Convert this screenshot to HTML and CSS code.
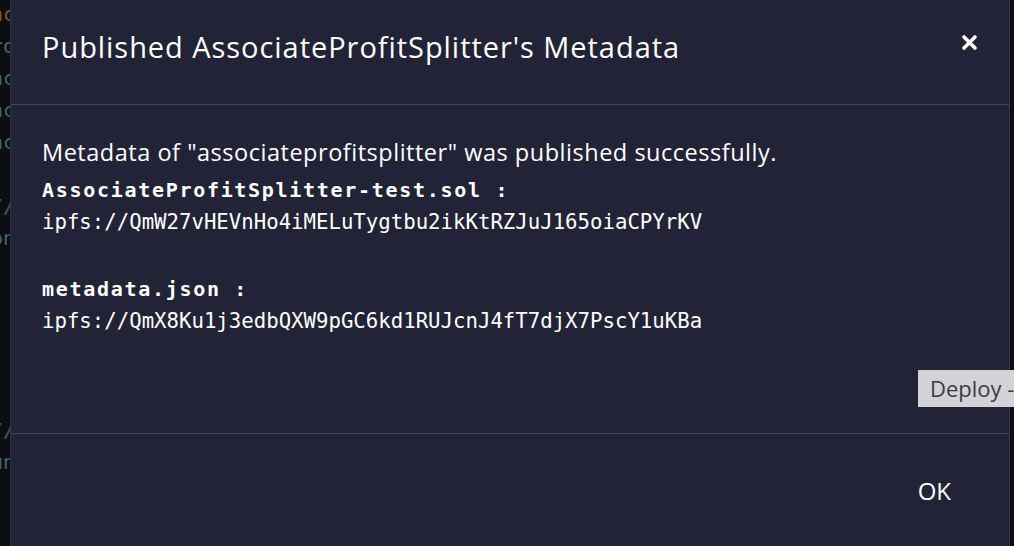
FILE: index.html
```html
<!DOCTYPE html>
<html lang="en">
<head>
<meta charset="utf-8">
<title>Published Metadata</title>
<link rel="stylesheet" href="styles.css">
</head>
<body>
<pre class="code"><span class="kw">unc</span>
<span class="id">pro</span>
<span class="ty">unc</span>
<span class="ty">unc</span>
<span class="ty">unc</span>

<span class="cm">///</span>
<span class="ty">con</span>



<span class="cm"> .</span>

<span class="cm">///</span>
<span class="ty">fun</span>

<span class="cm"> .</span></pre>

<div class="modal">
  <div class="modal-header">
    <h1 class="title">Published AssociateProfitSplitter's Metadata</h1>
    <button class="close" aria-label="Close">
      <svg width="17" height="17" viewBox="0 0 17 17"><path d="M3 3 L14 14 M14 3 L3 14" stroke="#ffffff" stroke-width="3.6" stroke-linecap="round" fill="none"/></svg>
    </button>
  </div>
  <div class="modal-body">
    <p class="msg">Metadata of "associateprofitsplitter" was published successfully.</p>
    <div class="file">
      <div class="label">AssociateProfitSplitter-test.sol :</div>
      <div class="hash">ipfs://QmW27vHEVnHo4iMELuTygtbu2ikKtRZJuJ165oiaCPYrKV</div>
    </div>
    <div class="file file-second">
      <div class="label">metadata.json :</div>
      <div class="hash">ipfs://QmX8Ku1j3edbQXW9pGC6kd1RUJcnJ4fT7djX7PscY1uKBa</div>
    </div>
  </div>
  <div class="modal-footer">
    <button class="ok">OK</button>
  </div>
</div>

<div class="tooltip">Deploy - transact (not payable)</div>
</body>
</html>
```

FILE: styles.css
```css
html, body {
  margin: 0;
  padding: 0;
  height: 100%;
}

body {
  background: #0d0e14;
  overflow: hidden;
  font-family: "Open Sans", "Noto Sans", sans-serif;
}

.code {
  margin: 0;
  padding: 0;
  margin-left: -21px;
  font-family: "DejaVu Sans Mono", monospace;
  font-size: 20px;
  line-height: 32px;
  margin-top: -2px;
  color: #4b4f5c;
}

.code .kw { color: #80542f; }
.code .id { color: #4c6470; }
.code .ty { color: #3b6474; }
.code .cm { color: #4e5058; }

.modal {
  position: fixed;
  left: 10px;
  top: 0;
  width: 998px;
  bottom: -20px;
  background: #222336;
  border-left: 1px solid #2f3046;
  border-right: 1px solid #34354a;
  display: flex;
  flex-direction: column;
}

.modal-header {
  height: 105px;
  box-sizing: border-box;
  border-bottom: 1px solid #45465a;
  padding: 30px 31px 0 31px;
  display: flex;
  align-items: flex-start;
  justify-content: space-between;
}

.title {
  margin: 0;
  font-family: "Open Sans", "Noto Sans", sans-serif;
  font-weight: 400;
  font-size: 29px;
  letter-spacing: 0.95px;
  line-height: 1.2;
  color: #ffffff;
}

.close {
  margin: 4px 0 0 0;
  padding: 0;
  border: 0;
  background: none;
  width: 17px;
  height: 17px;
  display: block;
}

.close svg {
  display: block;
}

.modal-body {
  padding: 30px 31px 99px 31px;
  color: #ffffff;
}

.msg {
  margin: 0;
  font-size: 23.5px;
  letter-spacing: 0.52px;
  line-height: 34px;
}

.file {
  margin-top: 4px;
}

.file-second {
  margin-top: 37px;
}

.label {
  font-family: "DejaVu Sans Mono", monospace;
  font-weight: 700;
  font-size: 20px;
  letter-spacing: 1.7px;
  line-height: 34px;
}

.hash {
  margin-top: 2px;
  font-family: "DejaVu Sans Mono", monospace;
  font-size: 20.7px;
  line-height: 26px;
}

.modal-footer {
  border-top: 1px solid #45465a;
  display: flex;
  justify-content: flex-end;
  padding: 31px 42px 0 0;
}

.ok {
  border: 0;
  background: none;
  color: #ffffff;
  font-family: "Open Sans", "Noto Sans", sans-serif;
  font-size: 24px;
  line-height: 1.2;
  padding: 12px 16px;
}

.tooltip {
  position: fixed;
  left: 918px;
  top: 370px;
  height: 37px;
  box-sizing: border-box;
  padding: 0 12px;
  background: #d3d2d7;
  color: #3d3d42;
  font-family: "Open Sans", "Noto Sans", sans-serif;
  font-size: 22px;
  line-height: 37px;
  white-space: nowrap;
}
```
